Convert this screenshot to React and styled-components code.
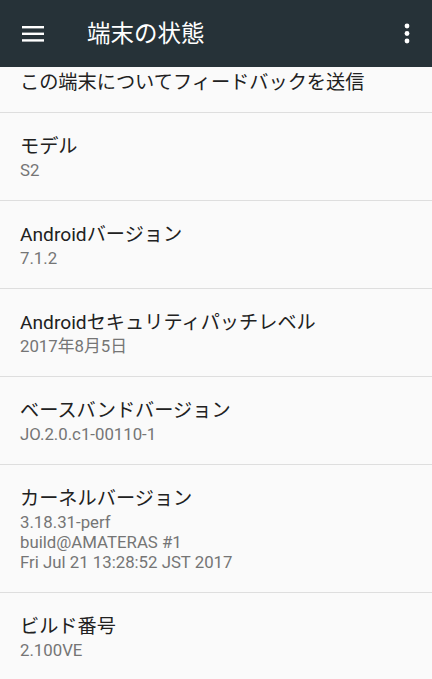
import React from "react";
import styled, { createGlobalStyle } from "styled-components";

const GlobalStyle = createGlobalStyle`
  html, body { margin: 0; padding: 0; background: #fafafa; }
  body { font-family: Roboto, "Noto Sans CJK JP", sans-serif; -webkit-font-smoothing: antialiased; }
`;

const Screen = styled.div`
  width: 432px;
  height: 679px;
  overflow: hidden;
  background: #fafafa;
  display: flex;
  flex-direction: column;
`;

const Toolbar = styled.header`
  height: 67px;
  flex: none;
  background: #263238;
  display: flex;
  align-items: center;
  padding: 0 14px 0 22px;
  box-sizing: border-box;
`;

const IconButton = styled.div`
  width: 22px;
  height: 22px;
  display: flex;
  align-items: center;
  justify-content: center;
  color: #fff;
`;

const Title = styled.h1`
  margin: 0 0 0 43px;
  flex: 1;
  font-family: Roboto, "Noto Sans CJK JP", sans-serif;
  font-weight: 400;
  font-size: 23.5px;
  line-height: 28px;
  color: #fff;
  padding-top: 1px;
`;

const List = styled.div`
  display: flex;
  flex-direction: column;
`;

const Item = styled.div`
  padding: ${(p) => (p.$partial ? "4px 20px 17px" : "22px 20px 20px")};
  border-bottom: 1px solid #dedede;
  display: flex;
  flex-direction: column;
`;

const ItemTitle = styled.div`
  font-size: 19.2px;
  line-height: 24px;
  color: #212121;
`;

const Summary = styled.div`
  margin-top: 1px;
  font-size: 16.8px;
  line-height: 20px;
  color: #757575;
  white-space: pre-line;
`;

const MenuIcon = () => (
  <svg width="22" height="16" viewBox="0 0 22 16">
    <rect x="0" y="0" width="22" height="2.4" fill="#fff" />
    <rect x="0" y="6.6" width="22" height="2.4" fill="#fff" />
    <rect x="0" y="13.2" width="22" height="2.4" fill="#fff" />
  </svg>
);

const MoreIcon = () => (
  <svg width="6" height="22" viewBox="0 0 6 22">
    <circle cx="3" cy="3" r="2.4" fill="#fff" />
    <circle cx="3" cy="10.5" r="2.4" fill="#fff" />
    <circle cx="3" cy="18" r="2.4" fill="#fff" />
  </svg>
);

const items = [
  { title: "モデル", summary: "S2" },
  { title: "Androidバージョン", summary: "7.1.2" },
  { title: "Androidセキュリティパッチレベル", summary: "2017年8月5日" },
  { title: "ベースバンドバージョン", summary: "JO.2.0.c1-00110-1" },
  {
    title: "カーネルバージョン",
    summary: "3.18.31-perf\nbuild@AMATERAS #1\nFri Jul 21 13:28:52 JST 2017",
  },
  { title: "ビルド番号", summary: "2.100VE" },
];

export default function App() {
  return (
    <>
      <GlobalStyle />
      <Screen>
        <Toolbar>
          <IconButton>
            <MenuIcon />
          </IconButton>
          <Title>端末の状態</Title>
          <IconButton>
            <MoreIcon />
          </IconButton>
        </Toolbar>
        <List>
          <Item $partial>
            <ItemTitle>この端末についてフィードバックを送信</ItemTitle>
          </Item>
          {items.map((it) => (
            <Item key={it.title}>
              <ItemTitle>{it.title}</ItemTitle>
              <Summary>{it.summary}</Summary>
            </Item>
          ))}
        </List>
      </Screen>
    </>
  );
}
